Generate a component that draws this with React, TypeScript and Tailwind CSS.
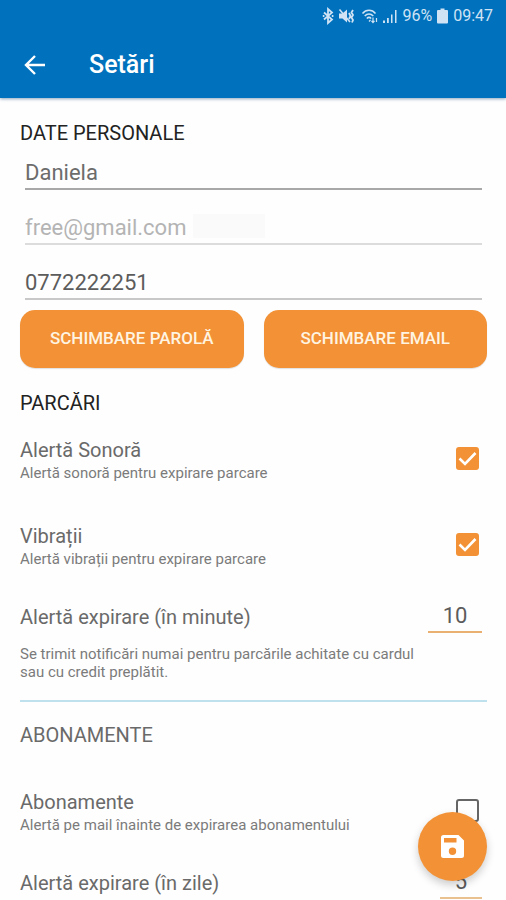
import { useState } from "react";

function StatusBar() {
  return (
    <div className="flex h-8 items-center justify-end pr-[13px] text-[16px] leading-5 text-[#cfe3f5]">
      <svg className="mr-[3px] h-[18px] w-[14px]" viewBox="0 0 14 18" fill="none" stroke="currentColor" strokeWidth="1.8" aria-hidden="true">
        <path d="M3 5.5 L11 12.5 L7 16 V2 L11 5.5 L3 12.5" />
        <path d="M1.800 9h1.600M10.800 9h1.600" />
      </svg>
      <svg className="mr-[6px] h-[18px] w-[17px]" viewBox="0 0 17 18" fill="none" stroke="currentColor" aria-hidden="true">
        <path d="M1 6.5h3.5L9 2.5v13L4.500 11.500H1z" fill="currentColor" stroke="none" />
        <path d="M1.500 2.500 L12 15" strokeWidth="1.600" />
        <path d="M11 6l1.500 3-1.500 3M15 3l-1.500 2.500L15 8l-1.500 2.500L15 13l-1 2.500" strokeWidth="1.800" />
      </svg>
      <svg className="mr-[3px] h-[18px] w-[18px]" viewBox="0 0 18 18" fill="none" stroke="currentColor" strokeWidth="1.5" aria-hidden="true">
        <path d="M1.500 6.500C5 2.300 11 2.300 14.500 6.500M3.700 9C6.200 6.300 9.800 6.300 12.300 9M5.800 11.500c1.400-1.400 3-1.400 4.400 0" />
        <path d="M8 14.500l1.500-1.500M12 10.500v5M10.500 13.800l1.500 1.700 1.500-1.700M15.500 15v-4" strokeWidth="1.200" />
      </svg>
      <svg className="mr-1 h-[18px] w-[16px]" viewBox="0 0 16 18" fill="currentColor" aria-hidden="true">
        <path d="M1 13.500h2V16H1zM5 11h1.800v5H5zM9 7.500h1.500V16H9zM13 3h1.500v13H13z" />
      </svg>
      <span>96%</span>
      <svg className="mx-[5px] h-[18px] w-[11px]" viewBox="0 0 11 18" fill="currentColor" aria-hidden="true">
        <path d="M3.500 1.500h4V3H10a1 1 0 0 1 1 1v11.500a1 1 0 0 1-1 1H1a1 1 0 0 1-1-1V4a1 1 0 0 1 1-1h2.500z" />
      </svg>
      <span>09:47</span>
    </div>
  );
}

function CheckRow({
  id,
  title,
  hint,
  initial,
  className,
}: {
  id: string;
  title: string;
  hint: string;
  initial: boolean;
  className: string;
}) {
  const [on, setOn] = useState(initial);
  return (
    <div className={`flex items-start justify-between ${className}`}>
      <label htmlFor={id}>
        <span className="block text-[20px] leading-6 text-[#6a6a6a]">{title}</span>
        <span className="block text-[15px] leading-[22px] text-[#7b7b7b]">{hint}</span>
      </label>
      <div className="mt-[9px] mr-2 grid">
        <input
          id={id}
          type="checkbox"
          checked={on}
          onChange={(e) => setOn(e.target.checked)}
          className="col-start-1 row-start-1 size-[23px] appearance-none rounded-[3px] border-2 border-[#666] checked:border-[#f29135] checked:bg-[#f29135]"
        />
        {on && (
          <svg className="pointer-events-none col-start-1 row-start-1 size-[23px]" viewBox="0 0 23 23" fill="none" stroke="#fff" strokeWidth="2.600" aria-hidden="true">
            <path d="M3.500 11.500l5.500 5.500L19.500 6" />
          </svg>
        )}
      </div>
    </div>
  );
}

const field = "h-9 border-b-2 bg-transparent pt-[3px] text-[22px] outline-none";

const action =
  "h-[58px] rounded-[15px] bg-[#f29135] text-[17px] font-medium text-[#fff4e2] shadow-[0_1px_1px_rgba(0,0,0,0.12)]";

export default function App() {
  return (
    <div className="min-h-screen bg-[#fefefe] font-['Roboto',sans-serif]">
      <header className="bg-[#0072bd] shadow-[0_1px_3px_rgba(0,60,110,0.45)]">
        <StatusBar />
        <div className="flex h-[66px] items-center pl-[23px]">
          <button type="button" aria-label="Înapoi" className="text-white">
            <svg className="size-6" viewBox="0 0 24 24" fill="none" stroke="currentColor" strokeWidth="2.400" aria-hidden="true">
              <path d="M22 12H3.500M12 3L3 12l9 9" />
            </svg>
          </button>
          <h1 className="ml-[42px] text-[25px] leading-8 font-medium text-white">Setări</h1>
        </div>
      </header>

      <main className="pt-[23px] pr-[19px] pl-5">
        <h2 className="text-[20px] leading-6 text-[#222]">DATE PERSONALE</h2>
        <div className="mt-[9px] flex flex-col gap-[19px] px-[5px]">
          <input aria-label="Nume" defaultValue="Daniela" className={`${field} border-[#a8a8a8] text-[#6c6c6c]`} />
          <div className="flex h-9 items-center border-b-2 border-[#dcdcdc]">
            <input aria-label="Email" type="email" disabled defaultValue="free@gmail.com" className="h-full w-[168px] bg-transparent pt-[3px] text-[22px] text-[#b4b4b4] outline-none" />
            <span className="h-6 w-[72px] bg-[#fafafa]" />
          </div>
          <input aria-label="Telefon" type="tel" defaultValue="0772222251" className={`${field} border-[#c8c8c8] text-[#5c5c5c]`} />
        </div>

        <div className="mt-[10px] grid grid-cols-2 gap-5">
          <button type="button" className={action}>SCHIMBARE PAROLĂ</button>
          <button type="button" className={action}>SCHIMBARE EMAIL</button>
        </div>

        <h2 className="mt-[23px] text-[20px] leading-6 text-[#222]">PARCĂRI</h2>
        <CheckRow id="sound" title="Alertă Sonoră" hint="Alertă sonoră pentru expirare parcare" initial={true} className="mt-[23px]" />
        <CheckRow id="vibration" title="Vibrații" hint="Alertă vibrații pentru expirare parcare" initial={true} className="mt-10" />

        <div className="mt-[30px] flex items-center justify-between">
          <label htmlFor="minutes" className="text-[20px] leading-6 text-[#6a6a6a]">Alertă expirare (în minute)</label>
          <input id="minutes" inputMode="numeric" defaultValue="10" className="mr-[5px] h-[33px] w-[54px] border-b-2 border-[#e9b071] text-center text-[22px] text-[#5c5c5c] outline-none" />
        </div>
        <p className="mt-3 max-w-[410px] text-[15px] leading-[18px] text-[#7b7b7b]">
          Se trimit notificări numai pentru parcările achitate cu cardul sau cu credit preplătit.
        </p>
        <hr className="mt-[19px] border-t-2 border-[#bfe1ee]" />

        <h2 className="mt-[21px] text-[20px] leading-6 text-[#6a6a6a]">ABONAMENTE</h2>
        <CheckRow id="subscriptions" title="Abonamente" hint="Alertă pe mail înainte de expirarea abonamentului" initial={false} className="mt-[43px]" />
        <div className="mt-[30px] flex items-center justify-between">
          <label htmlFor="days" className="text-[20px] leading-6 text-[#6a6a6a]">Alertă expirare (în zile)</label>
          <input id="days" inputMode="numeric" defaultValue="5" className="mr-[5px] h-[33px] w-[42px] border-b-2 border-[#e9c08f] text-center text-[22px] text-[#5c5c5c] outline-none" />
        </div>
      </main>

      <button type="button" aria-label="Salvează" className="fixed right-[19px] bottom-[19px] flex size-[69px] items-center justify-center rounded-full bg-[#f29135] shadow-[0_4px_8px_rgba(0,0,0,0.2)]">
        <svg className="size-[23px]" viewBox="0 0 23 23" aria-hidden="true">
          <path fill="#fff" fillRule="evenodd" d="M2.500 0H17.500L23 5.500V20.500A2.500 2.500 0 0 1 20.500 23H2.500A2.500 2.500 0 0 1 0 20.500V2.500A2.500 2.500 0 0 1 2.500 0zM3 3V7.500H15.500V3zM11.500 12.500a3.700 3.700 0 1 0 0 7.400a3.700 3.700 0 1 0 0-7.400z" />
        </svg>
      </button>
    </div>
  );
}
